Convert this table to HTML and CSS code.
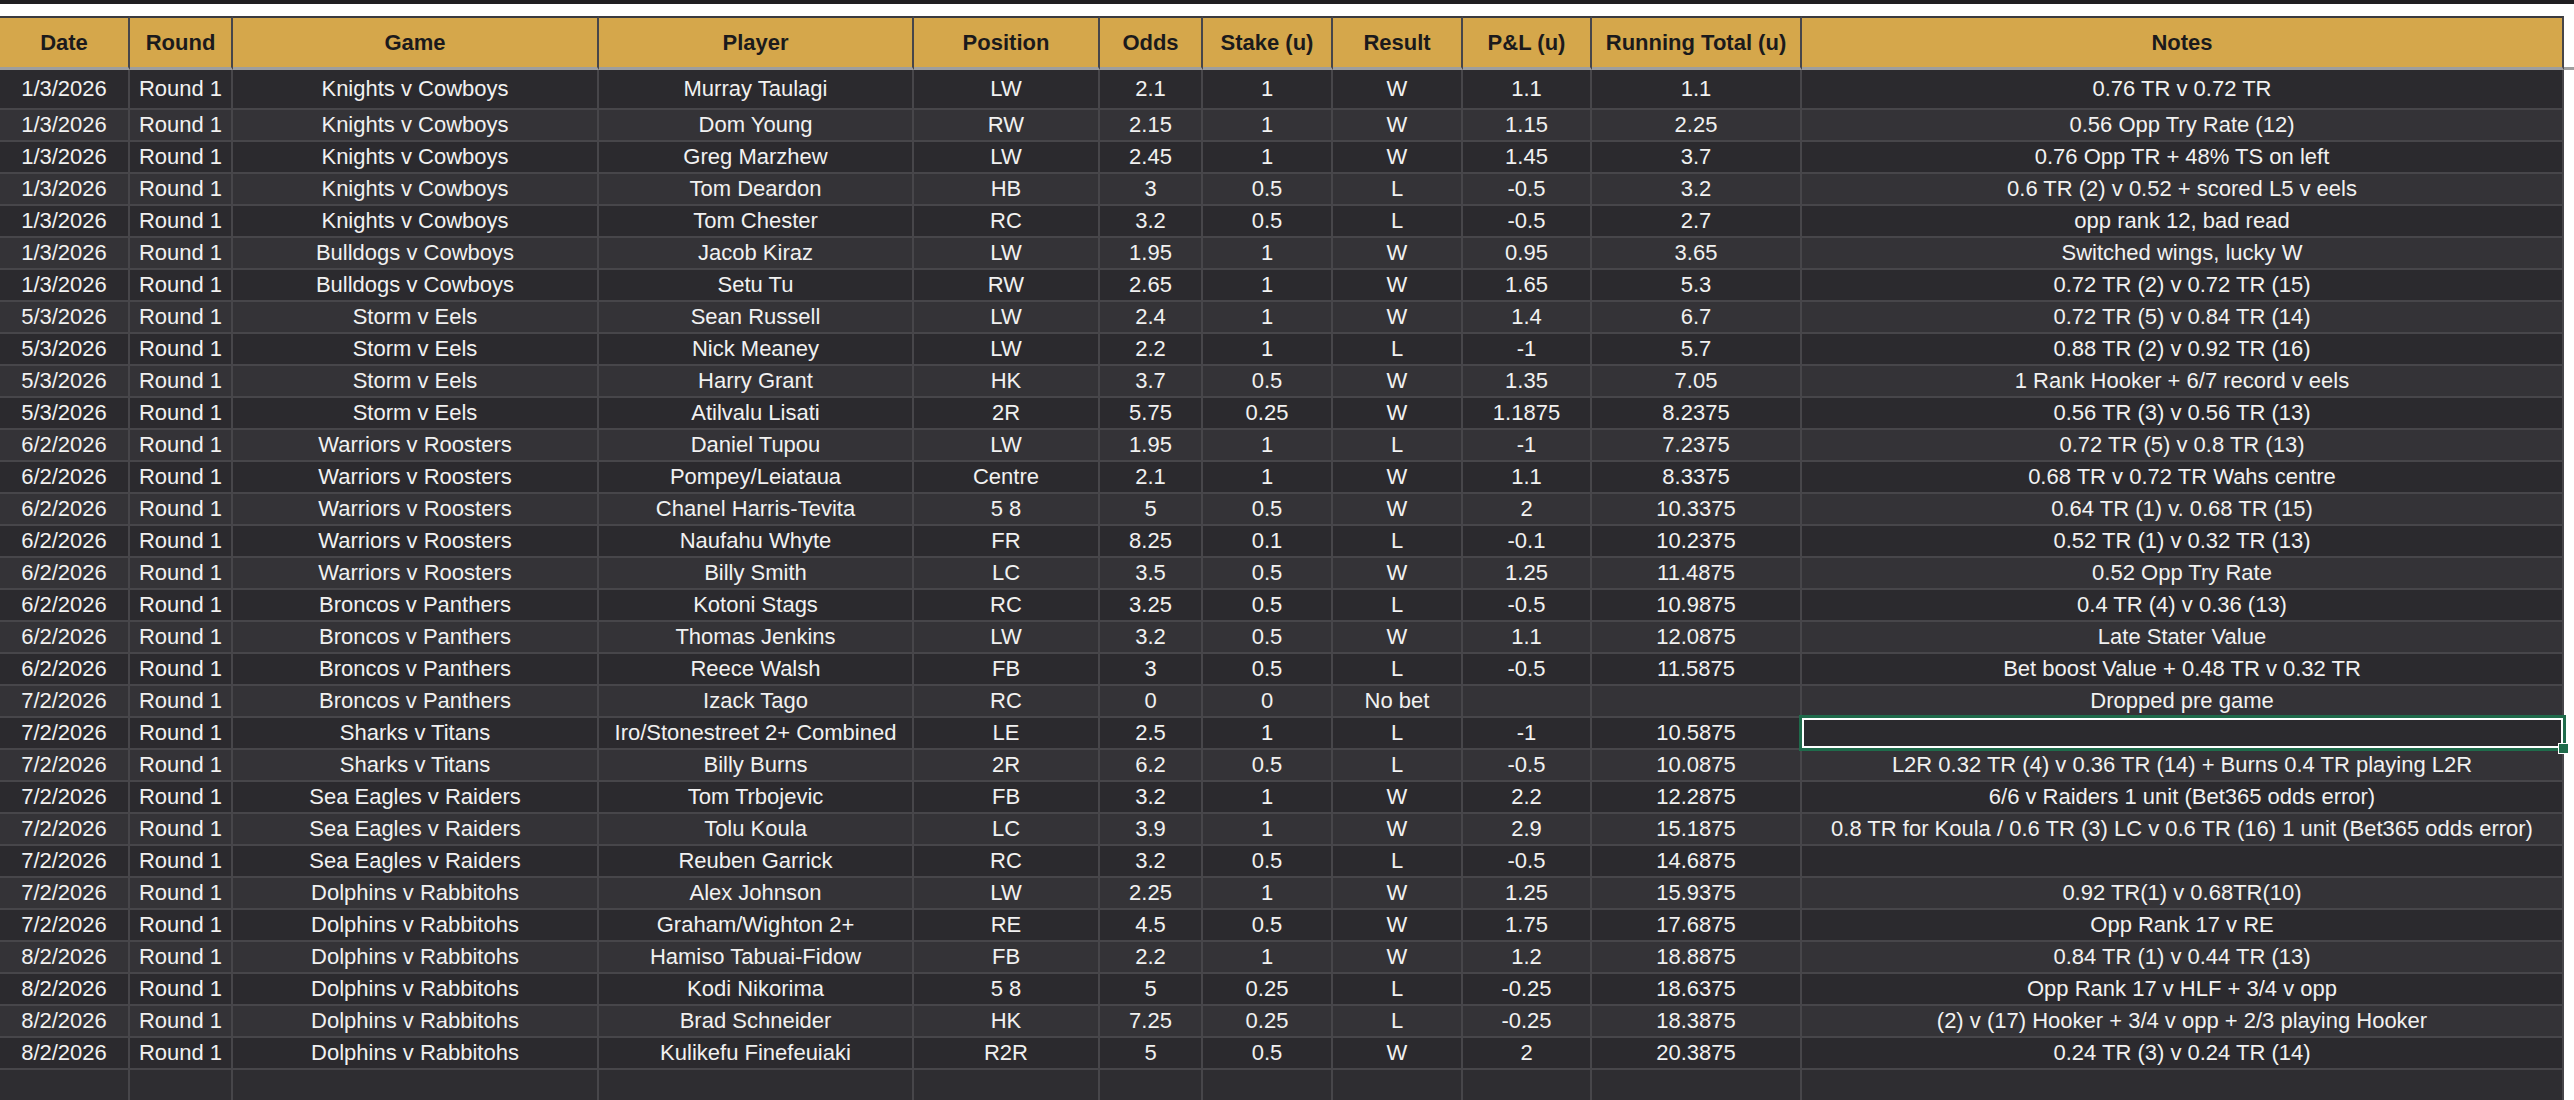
FILE: index.html
```html
<!DOCTYPE html>
<html>
<head>
<meta charset="utf-8">
<link rel="stylesheet" href="styles.css">
</head>
<body>
<div class="topbar"></div>
<div class="gap"></div>
<table class="sheet">
<colgroup>
<col class="c-date"><col class="c-round"><col class="c-game"><col class="c-player"><col class="c-pos"><col class="c-odds"><col class="c-stake"><col class="c-result"><col class="c-pl"><col class="c-run"><col class="c-notes"><col class="c-edge">
</colgroup>
<thead>
<tr><th>Date</th><th>Round</th><th>Game</th><th>Player</th><th>Position</th><th>Odds</th><th>Stake (u)</th><th>Result</th><th>P&amp;L (u)</th><th>Running Total (u)</th><th>Notes</th><th class="edge"></th></tr>
</thead>
<tbody>
<tr class="first"><td>1/3/2026</td><td>Round 1</td><td>Knights v Cowboys</td><td>Murray Taulagi</td><td>LW</td><td>2.1</td><td>1</td><td>W</td><td>1.1</td><td>1.1</td><td>0.76 TR v 0.72 TR</td><td class="edge"></td></tr>
<tr><td>1/3/2026</td><td>Round 1</td><td>Knights v Cowboys</td><td>Dom Young</td><td>RW</td><td>2.15</td><td>1</td><td>W</td><td>1.15</td><td>2.25</td><td>0.56 Opp Try Rate (12)</td><td class="edge"></td></tr>
<tr><td>1/3/2026</td><td>Round 1</td><td>Knights v Cowboys</td><td>Greg Marzhew</td><td>LW</td><td>2.45</td><td>1</td><td>W</td><td>1.45</td><td>3.7</td><td>0.76 Opp TR + 48% TS on left</td><td class="edge"></td></tr>
<tr><td>1/3/2026</td><td>Round 1</td><td>Knights v Cowboys</td><td>Tom Deardon</td><td>HB</td><td>3</td><td>0.5</td><td>L</td><td>-0.5</td><td>3.2</td><td>0.6 TR (2) v 0.52 + scored L5 v eels</td><td class="edge"></td></tr>
<tr><td>1/3/2026</td><td>Round 1</td><td>Knights v Cowboys</td><td>Tom Chester</td><td>RC</td><td>3.2</td><td>0.5</td><td>L</td><td>-0.5</td><td>2.7</td><td>opp rank 12, bad read</td><td class="edge"></td></tr>
<tr><td>1/3/2026</td><td>Round 1</td><td>Bulldogs v Cowboys</td><td>Jacob Kiraz</td><td>LW</td><td>1.95</td><td>1</td><td>W</td><td>0.95</td><td>3.65</td><td>Switched wings, lucky W</td><td class="edge"></td></tr>
<tr><td>1/3/2026</td><td>Round 1</td><td>Bulldogs v Cowboys</td><td>Setu Tu</td><td>RW</td><td>2.65</td><td>1</td><td>W</td><td>1.65</td><td>5.3</td><td>0.72 TR (2) v 0.72 TR (15)</td><td class="edge"></td></tr>
<tr><td>5/3/2026</td><td>Round 1</td><td>Storm v Eels</td><td>Sean Russell</td><td>LW</td><td>2.4</td><td>1</td><td>W</td><td>1.4</td><td>6.7</td><td>0.72 TR (5) v 0.84 TR (14)</td><td class="edge"></td></tr>
<tr><td>5/3/2026</td><td>Round 1</td><td>Storm v Eels</td><td>Nick Meaney</td><td>LW</td><td>2.2</td><td>1</td><td>L</td><td>-1</td><td>5.7</td><td>0.88 TR (2) v 0.92 TR (16)</td><td class="edge"></td></tr>
<tr><td>5/3/2026</td><td>Round 1</td><td>Storm v Eels</td><td>Harry Grant</td><td>HK</td><td>3.7</td><td>0.5</td><td>W</td><td>1.35</td><td>7.05</td><td>1 Rank Hooker + 6/7 record v eels</td><td class="edge"></td></tr>
<tr><td>5/3/2026</td><td>Round 1</td><td>Storm v Eels</td><td>Atilvalu Lisati</td><td>2R</td><td>5.75</td><td>0.25</td><td>W</td><td>1.1875</td><td>8.2375</td><td>0.56 TR (3) v 0.56 TR (13)</td><td class="edge"></td></tr>
<tr><td>6/2/2026</td><td>Round 1</td><td>Warriors v Roosters</td><td>Daniel Tupou</td><td>LW</td><td>1.95</td><td>1</td><td>L</td><td>-1</td><td>7.2375</td><td>0.72 TR (5) v 0.8 TR (13)</td><td class="edge"></td></tr>
<tr><td>6/2/2026</td><td>Round 1</td><td>Warriors v Roosters</td><td>Pompey/Leiataua</td><td>Centre</td><td>2.1</td><td>1</td><td>W</td><td>1.1</td><td>8.3375</td><td>0.68 TR v 0.72 TR Wahs centre</td><td class="edge"></td></tr>
<tr><td>6/2/2026</td><td>Round 1</td><td>Warriors v Roosters</td><td>Chanel Harris-Tevita</td><td>5 8</td><td>5</td><td>0.5</td><td>W</td><td>2</td><td>10.3375</td><td>0.64 TR (1) v. 0.68 TR (15)</td><td class="edge"></td></tr>
<tr><td>6/2/2026</td><td>Round 1</td><td>Warriors v Roosters</td><td>Naufahu Whyte</td><td>FR</td><td>8.25</td><td>0.1</td><td>L</td><td>-0.1</td><td>10.2375</td><td>0.52 TR (1) v 0.32 TR (13)</td><td class="edge"></td></tr>
<tr><td>6/2/2026</td><td>Round 1</td><td>Warriors v Roosters</td><td>Billy Smith</td><td>LC</td><td>3.5</td><td>0.5</td><td>W</td><td>1.25</td><td>11.4875</td><td>0.52 Opp Try Rate</td><td class="edge"></td></tr>
<tr><td>6/2/2026</td><td>Round 1</td><td>Broncos v Panthers</td><td>Kotoni Stags</td><td>RC</td><td>3.25</td><td>0.5</td><td>L</td><td>-0.5</td><td>10.9875</td><td>0.4 TR (4) v 0.36 (13)</td><td class="edge"></td></tr>
<tr><td>6/2/2026</td><td>Round 1</td><td>Broncos v Panthers</td><td>Thomas Jenkins</td><td>LW</td><td>3.2</td><td>0.5</td><td>W</td><td>1.1</td><td>12.0875</td><td>Late Stater Value</td><td class="edge"></td></tr>
<tr><td>6/2/2026</td><td>Round 1</td><td>Broncos v Panthers</td><td>Reece Walsh</td><td>FB</td><td>3</td><td>0.5</td><td>L</td><td>-0.5</td><td>11.5875</td><td>Bet boost Value + 0.48 TR v 0.32 TR</td><td class="edge"></td></tr>
<tr><td>7/2/2026</td><td>Round 1</td><td>Broncos v Panthers</td><td>Izack Tago</td><td>RC</td><td>0</td><td>0</td><td>No bet</td><td></td><td></td><td>Dropped pre game</td><td class="edge"></td></tr>
<tr><td>7/2/2026</td><td>Round 1</td><td>Sharks v Titans</td><td>Iro/Stonestreet 2+ Combined</td><td>LE</td><td>2.5</td><td>1</td><td>L</td><td>-1</td><td>10.5875</td><td class="selected"><div class="selection"><span class="handle"></span></div></td><td class="edge"></td></tr>
<tr><td>7/2/2026</td><td>Round 1</td><td>Sharks v Titans</td><td>Billy Burns</td><td>2R</td><td>6.2</td><td>0.5</td><td>L</td><td>-0.5</td><td>10.0875</td><td>L2R 0.32 TR (4) v 0.36 TR (14) + Burns 0.4 TR playing L2R</td><td class="edge"></td></tr>
<tr><td>7/2/2026</td><td>Round 1</td><td>Sea Eagles v Raiders</td><td>Tom Trbojevic</td><td>FB</td><td>3.2</td><td>1</td><td>W</td><td>2.2</td><td>12.2875</td><td>6/6 v Raiders 1 unit (Bet365 odds error)</td><td class="edge"></td></tr>
<tr><td>7/2/2026</td><td>Round 1</td><td>Sea Eagles v Raiders</td><td>Tolu Koula</td><td>LC</td><td>3.9</td><td>1</td><td>W</td><td>2.9</td><td>15.1875</td><td>0.8 TR for Koula / 0.6 TR (3) LC v 0.6 TR (16) 1 unit (Bet365 odds error)</td><td class="edge"></td></tr>
<tr><td>7/2/2026</td><td>Round 1</td><td>Sea Eagles v Raiders</td><td>Reuben Garrick</td><td>RC</td><td>3.2</td><td>0.5</td><td>L</td><td>-0.5</td><td>14.6875</td><td></td><td class="edge"></td></tr>
<tr><td>7/2/2026</td><td>Round 1</td><td>Dolphins v Rabbitohs</td><td>Alex Johnson</td><td>LW</td><td>2.25</td><td>1</td><td>W</td><td>1.25</td><td>15.9375</td><td>0.92 TR(1) v 0.68TR(10)</td><td class="edge"></td></tr>
<tr><td>7/2/2026</td><td>Round 1</td><td>Dolphins v Rabbitohs</td><td>Graham/Wighton 2+</td><td>RE</td><td>4.5</td><td>0.5</td><td>W</td><td>1.75</td><td>17.6875</td><td>Opp Rank 17 v RE</td><td class="edge"></td></tr>
<tr><td>8/2/2026</td><td>Round 1</td><td>Dolphins v Rabbitohs</td><td>Hamiso Tabuai-Fidow</td><td>FB</td><td>2.2</td><td>1</td><td>W</td><td>1.2</td><td>18.8875</td><td>0.84 TR (1) v 0.44 TR (13)</td><td class="edge"></td></tr>
<tr><td>8/2/2026</td><td>Round 1</td><td>Dolphins v Rabbitohs</td><td>Kodi Nikorima</td><td>5 8</td><td>5</td><td>0.25</td><td>L</td><td>-0.25</td><td>18.6375</td><td>Opp Rank 17 v HLF + 3/4 v opp</td><td class="edge"></td></tr>
<tr><td>8/2/2026</td><td>Round 1</td><td>Dolphins v Rabbitohs</td><td>Brad Schneider</td><td>HK</td><td>7.25</td><td>0.25</td><td>L</td><td>-0.25</td><td>18.3875</td><td>(2) v (17) Hooker + 3/4 v opp + 2/3 playing Hooker</td><td class="edge"></td></tr>
<tr><td>8/2/2026</td><td>Round 1</td><td>Dolphins v Rabbitohs</td><td>Kulikefu Finefeuiaki</td><td>R2R</td><td>5</td><td>0.5</td><td>W</td><td>2</td><td>20.3875</td><td>0.24 TR (3) v 0.24 TR (14)</td><td class="edge"></td></tr>
<tr class="blank"><td></td><td></td><td></td><td></td><td></td><td></td><td></td><td></td><td></td><td></td><td></td><td class="edge"></td></tr>
</tbody>
</table>
</body>
</html>
```
FILE: styles.css
```css
html, body {
  margin: 0;
  padding: 0;
  background: #ffffff;
  overflow: hidden;
}

body {
  width: 2574px;
  height: 1100px;
  font-family: "Liberation Sans", Arial, sans-serif;
}

.topbar {
  height: 4px;
  background: #1f1e21;
}

.gap {
  height: 12px;
  background: #ffffff;
}

.sheet {
  border-collapse: separate;
  border-spacing: 0;
  table-layout: fixed;
  width: 2574px;
  font-size: 22px;
}

.c-date { width: 130px; }
.c-round { width: 103px; }
.c-game { width: 366px; }
.c-player { width: 315px; }
.c-pos { width: 186px; }
.c-odds { width: 103px; }
.c-stake { width: 130px; }
.c-result { width: 130px; }
.c-pl { width: 129px; }
.c-run { width: 210px; }
.c-notes { width: 762px; }
.c-edge { width: 10px; }

.sheet th,
.sheet td {
  box-sizing: border-box;
  padding: 0;
  text-align: center;
  vertical-align: middle;
  white-space: nowrap;
  overflow: visible;
}

.sheet th {
  height: 54px;
  background: #d5a74b;
  color: #1b1a1c;
  font-weight: bold;
  border-top: 2px solid #3b3a3e;
  border-right: 2px solid #47464a;
  border-bottom: 3px solid #9e9e9e;
  line-height: 26px;
}

.sheet td {
  height: 32px;
  color: #f1f1f1;
  border-right: 2px solid #47464a;
  border-bottom: 2px solid #47464a;
  line-height: 26px;
}

.sheet tbody tr:nth-child(odd) td {
  background: #2b2a2e;
}

.sheet tbody tr:nth-child(even) td {
  background: #343337;
}

.sheet tbody tr.first td {
  height: 40px;
}

.sheet tbody tr.blank td {
  height: 40px;
  background: #2e2d31;
}

.sheet th.edge {
  background: #ffffff;
  border-top: none;
  border-right: none;
}

.sheet tbody tr td.edge {
  background: #ffffff;
  border-right: none;
  border-bottom: none;
}

.sheet td.selected {
  position: relative;
}

.selection {
  position: absolute;
  left: -3px;
  top: -3px;
  right: -4px;
  bottom: -3px;
  border: 3px solid #1f6b4b;
  box-shadow: inset 0 0 0 2px #ffffff;
}

.handle {
  position: absolute;
  right: -6px;
  bottom: -6px;
  width: 9px;
  height: 9px;
  background: #1f6b4b;
  border: 1px solid #ffffff;
}
```
